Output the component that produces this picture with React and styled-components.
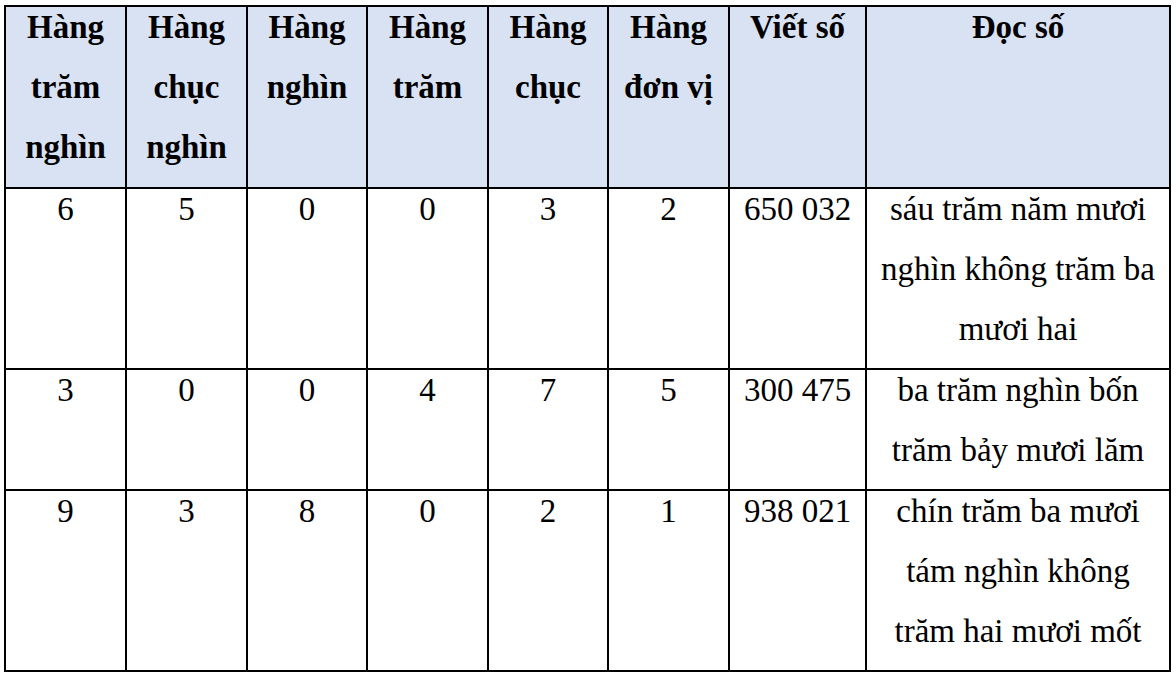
import React from 'react';
import styled, { createGlobalStyle } from 'styled-components';

const GlobalStyle = createGlobalStyle`
  html, body {
    margin: 0;
    padding: 0;
    background: #fff;
  }
  body {
    font-family: "Liberation Serif", "Times New Roman", serif;
    color: #000;
  }
`

const Page = styled.div`
  padding: 5px 0 0 4px;
`

const Table = styled.table`
  width: 1167px;
  border-collapse: collapse;
  table-layout: fixed;
  font-size: 33px;
  line-height: 60px;
`

const Col = styled.col`
  width: ${p => p.$w}px;
`

const HeadCell = styled.th`
  background: #d9e2f3;
  border: 2px solid #000;
  padding: 0 6px;
  font-weight: 700;
  text-align: center;
  vertical-align: top;
`

const Cell = styled.td`
  border: 2px solid #000;
  padding: 0 6px;
  font-weight: 400;
  text-align: center;
  vertical-align: top;
`

const Lines = styled.div`
  margin: -10px 0 ${p => p.$gap}px;
  white-space: nowrap;
`

const widths = [121, 121, 120, 121, 120, 121, 137, 304];

const headers = [
  ['Hàng', 'trăm', 'nghìn'],
  ['Hàng', 'chục', 'nghìn'],
  ['Hàng', 'nghìn'],
  ['Hàng', 'trăm'],
  ['Hàng', 'chục'],
  ['Hàng', 'đơn vị'],
  ['Viết số'],
  ['Đọc số'],
];

const rows = [
  {
    digits: ['6', '5', '0', '0', '3', '2'],
    number: '650 032',
    read: ['sáu trăm năm mươi', 'nghìn không trăm ba', 'mươi hai'],
  },
  {
    digits: ['3', '0', '0', '4', '7', '5'],
    number: '300 475',
    read: ['ba trăm nghìn bốn', 'trăm bảy mươi lăm'],
  },
  {
    digits: ['9', '3', '8', '0', '2', '1'],
    number: '938 021',
    read: ['chín trăm ba mươi', 'tám nghìn không', 'trăm hai mươi mốt'],
  },
];

const Multi = ({ lines, gap = 9 }) => (
  <Lines $gap={gap}>
    {lines.map((l, i) => <div key={i}>{l}</div>)}
  </Lines>
)

export default function App() {
  return (
    <Page>
      <GlobalStyle />
      <Table>
        <colgroup>
          {widths.map((w, i) => <Col key={i} $w={w} />)}
        </colgroup>
        <thead>
          <tr>
            {headers.map((h, i) => (
              <HeadCell key={i}><Multi lines={h} gap={10} /></HeadCell>
            ))}
          </tr>
        </thead>
        <tbody>
          {rows.map((r, i) => (
            <tr key={i}>
              {r.digits.map((d, j) => (
                <Cell key={j}><Multi lines={[d]} /></Cell>
              ))}
              <Cell><Multi lines={[r.number]} /></Cell>
              <Cell><Multi lines={r.read} /></Cell>
            </tr>
          ))}
        </tbody>
      </Table>
    </Page>
  )
}
